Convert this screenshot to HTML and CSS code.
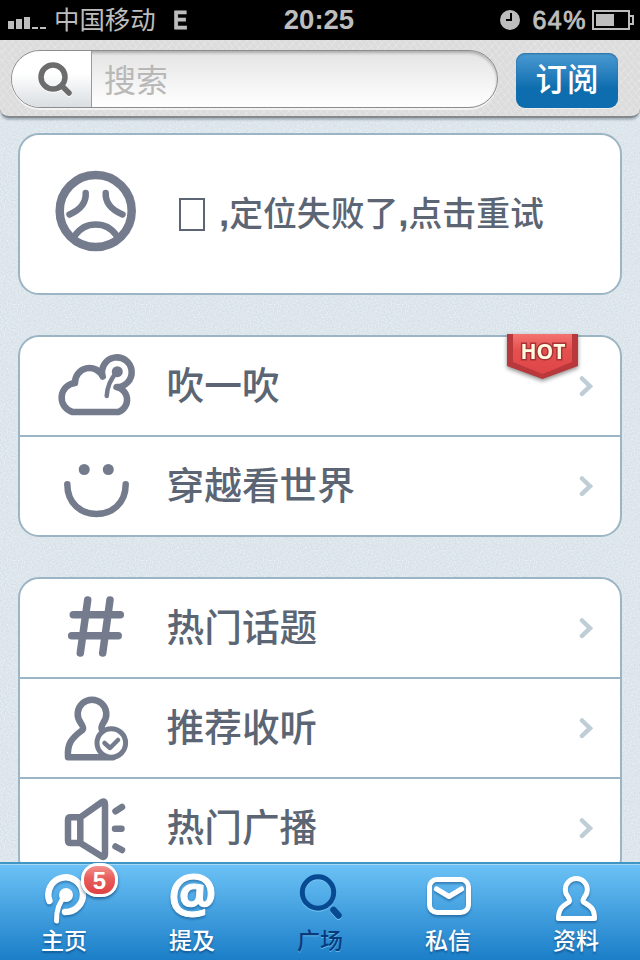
FILE: index.html
```
<!DOCTYPE html>
<html lang="zh-CN">
<head>
  <meta charset="UTF-8">
  <title>广场</title>
  <link rel="stylesheet" href="styles.css">
</head>
<body>

  <div class="screen">
    <div class="status">
      <div class="status-left">
        <svg class="signal" width="38" height="14" viewBox="0 0 38 14">
          <path d="M0 6h6v8H0zM8 4h6v10H8zM16 2h6v12h-6zM24 12h6v2h-6zM32 12h6v2h-6z"/>
        </svg>
        <span class="carrier">中国移动</span>
        <span class="network">E</span>
      </div>
      <div class="clock">20:25</div>
      <div class="status-right">
        <svg width="20" height="20" viewBox="0 0 20 20">
          <circle cx="10" cy="10" r="10"/>
          <path class="hands" d="M11 3v7H6"/>
        </svg>
        <span class="percent">64%</span>
        <svg class="battery" width="42" height="20" viewBox="0 0 42 20">
          <path class="case" d="M1 1h36v18H1zM38 6h3v8h-3"/>
          <path d="M4 4h18v12H4z"/>
        </svg>
      </div>
    </div>

    <div class="header">
      <div class="search">
        <div class="search-icon">
          <svg width="36" height="36" viewBox="0 0 36 36">
            <circle cx="16" cy="16" r="12"/>
            <path d="M25 25l7 7"/>
          </svg>
        </div>
        <div class="search-text">搜索</div>
      </div>
      <div class="subscribe">订阅</div>
    </div>

    <div class="content">
      <div class="card locate">
        <svg class="icon" viewBox="0 0 120 98">
          <circle class="face" cx="59.7" cy="46" r="36"/>
          <path d="M49.7 28Q50.5 42 33.5 49.5M69.7 28Q69 42 86.5 49.5M39 70.5A25 25 0 0 1 80.5 70.5"/>
        </svg>
        <div class="locate-text"><span class="tofu"></span><b>,</b>定位失败了<b>,</b>点击重试</div>
      </div>

      <div class="card">
        <div class="row">
          <svg class="icon" viewBox="0 0 120 98">
            <path d="M66.7 39.5A14.5 14.5 0 0 0 39 46A14.8 14.8 0 0 0 36.5 75H82.5A13 13 0 0 0 80.5 50A14.8 14.8 0 1 0 66.7 39.5"/>
            <path class="thin" d="M81 35Q71.5 45 70.7 59"/>
            <circle class="dot" cx="81.3" cy="34.7" r="5.5"/>
          </svg>
          <span class="label">吹一吹</span>
          <svg class="arrow" viewBox="0 0 14 22"><path d="M3 3.5l8 7.7-8 7.7"/></svg>
        </div>
        <div class="row">
          <svg class="icon" viewBox="0 0 120 98">
            <circle class="dot" cx="48.2" cy="32.5" r="5.5"/>
            <circle class="dot" cx="72.3" cy="32.5" r="5.5"/>
            <path d="M31.3 47.3C31.3 87 89.7 87 89.7 47.3"/>
          </svg>
          <span class="label">穿越看世界</span>
          <svg class="arrow" viewBox="0 0 14 22"><path d="M3 3.5l8 7.7-8 7.7"/></svg>
        </div>
        <svg class="hot" width="79" height="52" viewBox="0 0 79 52">
          <defs>
            <linearGradient id="hot-fill" x1="0" y1="0" x2="0" y2="1">
              <stop offset="0" stop-color="#f47470"/>
              <stop offset=".4" stop-color="#e5504f"/>
              <stop offset="1" stop-color="#de4547"/>
            </linearGradient>
          </defs>
          <path class="hot-edge" d="M4 0h71v32L39.5 45 4 32z"/>
          <path fill="url(#hot-fill)" d="M10 0h59v28L39.5 40 10 28z"/>
          <text x="40" y="25" text-anchor="middle">HOT</text>
        </svg>
      </div>

      <div class="card">
        <div class="row">
          <svg class="icon hash" viewBox="0 0 120 98">
            <path d="M51.7 21l-7.4 53M74 21l-7.3 53M37.3 35.7h47M35.7 56.7h46.5"/>
          </svg>
          <span class="label">热门话题</span>
          <svg class="arrow" viewBox="0 0 14 22"><path d="M3 3.5l8 7.7-8 7.7"/></svg>
        </div>
        <div class="row">
          <svg class="icon" viewBox="0 0 120 98">
            <path d="M77 78.3H32C31 65 35 59.5 46.5 51C48.5 49 46 46 44.5 43.5A14.3 14.3 0 1 1 67.5 43.5C66 46 64.5 48 66 51"/>
            <circle class="badge-ring" cx="75.3" cy="64" r="14.3"/>
            <path class="check" d="M68.5 64l5.5 5L82 61"/>
          </svg>
          <span class="label">推荐收听</span>
          <svg class="arrow" viewBox="0 0 14 22"><path d="M3 3.5l8 7.7-8 7.7"/></svg>
        </div>
        <div class="row">
          <svg class="icon" viewBox="0 0 120 98">
            <path d="M44.3 38.3H34.5Q32 38.3 32 41V61.5Q32 64 34.5 64H44.3zM44.3 38.3L66 23Q69 21.5 69 25V75Q69 79 66 77.5L44.3 64M79.5 32.3l6.5-4.3M79 49.7h6.5M79.5 67.5l6.5 3.5"/>
          </svg>
          <span class="label">热门广播</span>
          <svg class="arrow" viewBox="0 0 14 22"><path d="M3 3.5l8 7.7-8 7.7"/></svg>
        </div>
      </div>
    </div>

    <div class="tabs">
      <div class="tab">
        <svg viewBox="0 0 72 56">
          <path class="wide" d="M21.5 33A17.3 17.3 0 1 1 37 44"/>
          <path d="M38 27Q28 37 28.5 53"/>
          <circle class="solid" cx="38" cy="27" r="7"/>
        </svg>
        <span>主页</span>
        <div class="badge">5</div>
      </div>
      <div class="tab">
        <svg viewBox="0 0 72 56"><text x="36.5" y="45" text-anchor="middle">@</text></svg>
        <span>提及</span>
      </div>
      <div class="tab active">
        <svg viewBox="0 0 72 56">
          <circle cx="34" cy="24.5" r="15.7"/>
          <path class="wide" d="M49.5 42l5 5.5"/>
        </svg>
        <span>广场</span>
      </div>
      <div class="tab">
        <svg viewBox="0 0 72 56">
          <rect x="17.5" y="11.5" width="39" height="33" rx="7.5"/>
          <path d="M24.5 21L37 28.5 49.5 21"/>
        </svg>
        <span>私信</span>
      </div>
      <div class="tab">
        <svg viewBox="0 0 72 56">
          <path d="M18.5 50.5H54.5C54.5 41 51 38.5 43.5 34C42 32.5 43.5 31 44.8 28.5A11 11 0 1 0 27.8 28.5C29 31 30.5 32.5 29 34C22 38.5 18.5 41 18.5 50.5z"/>
        </svg>
        <span>资料</span>
      </div>
    </div>
  </div>

</body>
</html>
```
FILE: styles.css
```
* {
  box-sizing: border-box;
}

body {
  margin: 0;
  font-family: "Liberation Sans", "Noto Sans CJK SC", sans-serif;
}

.screen {
  width: 640px;
  height: 960px;
  display: flex;
  flex-direction: column;
  overflow: hidden;
  background: #d5e0e7 url('data:image/svg+xml,<svg xmlns="http://www.w3.org/2000/svg" width="128" height="128"><filter id="n" x="0" y="0" width="1" height="1" color-interpolation-filters="sRGB"><feTurbulence type="fractalNoise" baseFrequency=".7" numOctaves="2" stitchTiles="stitch"/><feColorMatrix values="0 0 0 0 1 0 0 0 0 1 0 0 0 0 1 .9 0 0 0 -.25"/></filter><rect width="128" height="128" filter="url(%23n)"/></svg>');
}

/* status bar */
.status {
  flex: none;
  height: 40px;
  padding: 0 6px 0 8px;
  display: grid;
  grid-template-columns: 1fr auto 1fr;
  align-items: center;
  background: #000;
  color: #bdbdbd;
  fill: #bdbdbd;
}

.status-left, .status-right {
  display: flex;
  align-items: center;
}

.status-right {
  justify-content: flex-end;
}

.signal {
  margin: 4px 8px 0 0;
}

.carrier {
  font-size: 25.4px;
  line-height: 38px;
}

.network {
  margin-left: 16px;
  font-size: 25px;
  font-weight: bold;
  transform: scaleX(.85);
  -webkit-text-stroke: .8px #bdbdbd;
}

.clock {
  margin-right: 4px;
  font-size: 27.5px;
  font-weight: bold;
}

.percent {
  margin: 0 5px 0 12px;
  font-size: 25px;
  letter-spacing: 1.5px;
  -webkit-text-stroke: .9px #bdbdbd;
}

.hands, .case {
  fill: none;
  stroke: #000;
  stroke-width: 2;
}

.case {
  stroke: #bdbdbd;
}

/* search header */
.header {
  flex: none;
  height: 78px;
  padding: 10px 22px 10px 11px;
  display: flex;
  justify-content: space-between;
  border-bottom: 2px solid #85898d;
  border-radius: 0 0 9px 9px;
  box-shadow: 0 2px 2px rgba(100,115,130,.45);
  background:
    repeating-linear-gradient(52deg, rgba(255,255,255,.18) 0 1px, transparent 1px 5px),
    repeating-linear-gradient(-48deg, rgba(255,255,255,.18) 0 1px, transparent 1px 6px),
    #dcdcdc;
}

.search {
  width: 487px;
  height: 58px;
  display: flex;
  overflow: hidden;
  border: 1px solid #8d8d8d;
  border-radius: 29px;
  background: linear-gradient(#e4e4e4, #fff);
  box-shadow: inset 0 2px 3px rgba(0,0,0,.25), 0 2px 0 rgba(255,255,255,.6);
}

.search-icon {
  width: 80px;
  padding: 10px 0 0 25px;
  border-right: 1px solid #999;
  background: linear-gradient(#fff 40%, #d9dee2);
}

.search-icon svg {
  fill: none;
  stroke: #6c6c6c;
  stroke-width: 5.5;
  stroke-linecap: round;
  filter: drop-shadow(0 1px 0 #fff);
}

.search-text {
  padding-left: 12px;
  font-size: 32px;
  line-height: 60px;
  color: #b8b8b8;
}

.subscribe {
  width: 102px;
  height: 55px;
  margin-top: 3px;
  border-radius: 9px;
  background: linear-gradient(#4c9ad2, #0d6dae 65%);
  box-shadow: inset 0 1px 2px #286f9f, 0 1px 0 #eee;
  color: #fff;
  font-size: 31.5px;
  font-weight: 500;
  line-height: 55px;
  text-align: center;
}

/* cards */
.content {
  flex: 1;
  min-height: 0;
  padding: 15px 18px 0;
  overflow: hidden;
  display: flex;
  flex-direction: column;
  gap: 40px;
}

.card {
  flex: none;
  position: relative;
  border: 2px solid #9cb5c4;
  border-radius: 21px;
  background: #fff;
}

.locate, .row {
  display: flex;
  align-items: center;
  padding: 0 27px 0 16px;
}

.locate {
  height: 162px;
}

.row {
  height: 98px;
}

.row + .row {
  height: 100px;
  border-top: 2px solid #9cb5c4;
}

.icon {
  width: 120px;
  height: 98px;
  fill: none;
  stroke: #737b8c;
  stroke-width: 6.5;
  stroke-linecap: round;
  stroke-linejoin: round;
}

.icon .face {
  stroke-width: 8.5;
}

.icon .thin {
  stroke-width: 4.5;
}

.icon .dot {
  fill: #737b8c;
  stroke: none;
}

.hash {
  stroke-width: 7.5;
}

.icon .badge-ring {
  fill: #fff;
  stroke-width: 5;
}

.icon .check {
  stroke-width: 4.5;
}

.label, .locate-text {
  color: #5b6573;
  font-weight: 500;
}

.label {
  flex: 1;
  margin-left: 10.5px;
  font-size: 37.7px;
  line-height: 50px;
}

.locate-text {
  display: flex;
  align-items: center;
  margin-left: 23px;
  font-size: 33.8px;
  line-height: 50px;
}

.locate-text b {
  font-size: 37px;
}

.tofu {
  width: 26px;
  height: 33px;
  margin-right: 14px;
  border: 2px solid #5b6573;
}

.arrow {
  width: 14px;
  height: 22px;
  fill: none;
  stroke: #bfced6;
  stroke-width: 4.5;
  stroke-linecap: round;
}

.hot {
  position: absolute;
  top: -3px;
  right: 38px;
  filter: drop-shadow(0 2px 2px rgba(0,0,0,.45));
}

.hot-edge {
  fill: #b9383c;
}

.hot text {
  font: bold 21px "Open Sans", sans-serif;
  fill: #fffbe0;
  stroke: #a83236;
  stroke-width: 3px;
  paint-order: stroke;
}

/* bottom tabs */
.tabs {
  flex: none;
  height: 98px;
  display: flex;
  border-top: 2px solid #3f96c4;
  background: linear-gradient(#6cc2f6, #1b7ec8);
  box-shadow: inset 0 1px 0 #a4d8f5;
}

.tab {
  position: relative;
  flex: 1;
  padding-top: 4px;
  display: flex;
  flex-direction: column;
  align-items: center;
  color: #fff;
  font-size: 23px;
  line-height: 34px;
  font-weight: 500;
  text-shadow: 0 2px 2px rgba(0,50,100,.5);
}

.tab svg {
  width: 72px;
  height: 56px;
  overflow: visible;
  fill: none;
  stroke: #fff;
  stroke-width: 5;
  stroke-linecap: round;
  stroke-linejoin: round;
  filter: drop-shadow(0 2px 1px rgba(0,50,100,.4));
}

.tab .wide {
  stroke-width: 6.5;
}

.tab .solid {
  fill: #fff;
  stroke: none;
}

.tab text {
  font: bold 54px "Open Sans", sans-serif;
  fill: #fff;
  stroke-width: 1;
  text-shadow: none;
}

.tab.active {
  color: #073b7c;
  text-shadow: 0 1px 0 #66b6ea;
}

.active svg {
  stroke: #074a91;
  filter: drop-shadow(0 1px 0 #77c4f3);
}

.badge {
  position: absolute;
  top: -1px;
  left: 81px;
  width: 37px;
  height: 34px;
  border: 3px solid #fff;
  border-radius: 16px;
  background: linear-gradient(#f3908d, #e85d5b 45%, #df4144);
  box-shadow: 0 2px 3px rgba(0,40,80,.55);
  font-size: 24px;
  font-weight: bold;
  line-height: 29px;
  text-align: center;
  text-shadow: none;
}
```
